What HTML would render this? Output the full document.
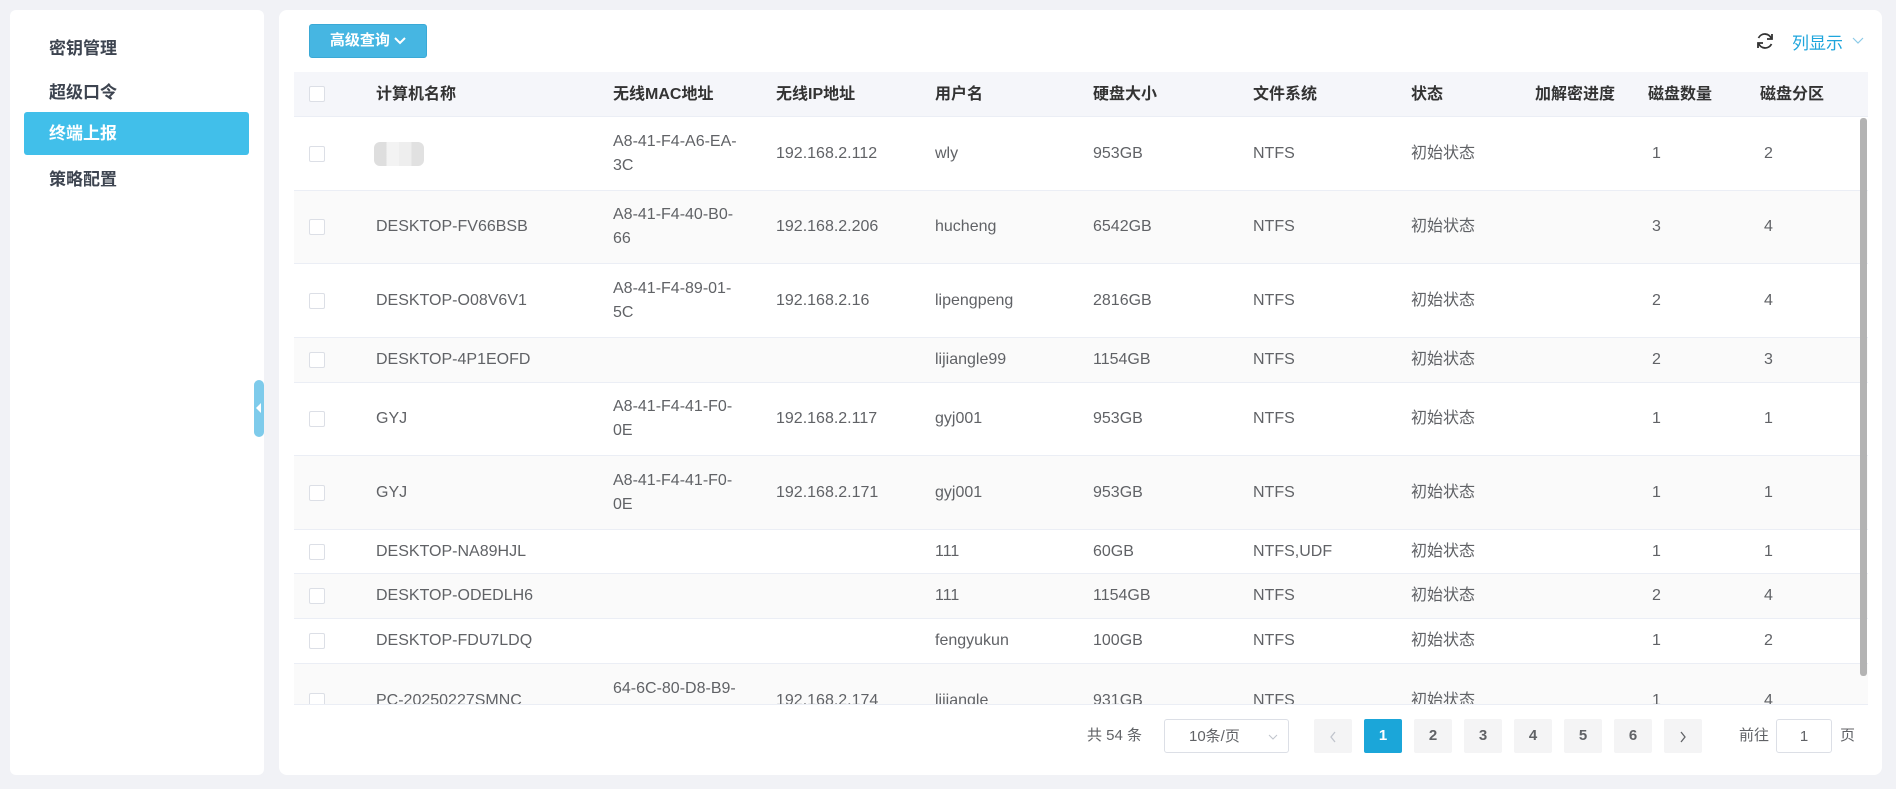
<!DOCTYPE html>
<html><head><meta charset="utf-8"><style>
*{margin:0;padding:0;box-sizing:border-box}
body{width:1896px;height:789px;background:#f1f2f6;font-family:"Liberation Sans","Noto Sans CJK SC",sans-serif;position:relative;overflow:hidden;color:#606266}
.side{position:absolute;left:10px;top:10px;width:254px;height:765px;background:#fff;border-radius:6px}
.mi{position:absolute;left:14px;width:225px;height:43px;line-height:43px;padding-left:25px;font-size:17px;font-weight:bold;color:#3d4450;border-radius:3px}
.mi.on{background:#41bfea;color:#fff}
.handle{position:absolute;left:254px;top:380px;width:10px;height:57px;background:#7ecbeb;border-radius:5px}
.handle:after{content:"";position:absolute;left:2px;top:23px;border:5px solid transparent;border-right:5px solid #fff;border-left:0}
.main{position:absolute;left:279px;top:10px;width:1603px;height:765px;background:#fff;border-radius:8px}
.btn{position:absolute;left:309px;top:24px;width:118px;height:34px;background:#46b6e2;border:1px solid #3aa9d6;border-radius:3px;color:#fff;font-size:15px;font-weight:bold;line-height:32px;text-align:center}
.hdr{position:absolute;left:294px;top:72px;width:1574px;height:45px;background:#f5f6fa;border-bottom:1px solid #ebeef5}
.th{position:absolute;top:0;line-height:45px;font-size:16px;font-weight:bold;color:#333}
.body{position:absolute;left:294px;top:117px;width:1574px;height:588px;overflow:hidden;border-bottom:1px solid #ebeef5}
.row{position:absolute;left:0;width:1574px;border-bottom:1px solid #ebeef5}
.row.g{background:#fafafa}
.td{position:absolute;top:50%;transform:translateY(-50%);font-size:16px;line-height:24px;color:#606266}
.cb{position:absolute;left:15px;width:16px;height:16px;border:1px solid #dcdfe6;border-radius:2px;background:#fff;top:50%;margin-top:-8px}
.sb{position:absolute;left:1860px;top:118px;width:7px;height:558px;background:#b3b3b3;border-radius:3px}
.pg{position:absolute;top:719px;height:34px;line-height:34px;font-size:15px;color:#606266}
.pb{position:absolute;top:719px;width:38px;height:34px;background:#f4f4f5;border-radius:2px;text-align:center;line-height:34px;font-size:15px;font-weight:bold;color:#606266}
.pb svg{position:absolute;left:15px;top:12px}
</style></head><body>
<div class="side">
<div class="mi" style="top:17px">密钥管理</div>
<div class="mi" style="top:61px">超级口令</div>
<div class="mi on" style="top:102px">终端上报</div>
<div class="mi" style="top:148px">策略配置</div>
</div>
<div class="handle"></div>
<div class="main"></div>
<div class="btn">高级查询 <svg width="12" height="8" viewBox="0 0 12 8" style="vertical-align:middle"><path d="M1 1l5 5 5-5" stroke="#fff" stroke-width="2" fill="none"/></svg></div>
<svg style="position:absolute;left:1755px;top:31px" width="20" height="20" viewBox="0 0 20 20"><path d="M16.5 8A7 7 0 0 0 3.5 7" stroke="#333" stroke-width="1.8" fill="none"/><path d="M3.5 12a7 7 0 0 0 13 1" stroke="#333" stroke-width="1.8" fill="none"/><path d="M17 3v5h-5" stroke="#333" stroke-width="1.8" fill="none"/><path d="M3 17v-5h5" stroke="#333" stroke-width="1.8" fill="none"/></svg>
<div style="position:absolute;left:1792px;top:29px;font-size:17px;color:#1ea5dc">列显示</div>
<svg style="position:absolute;left:1852px;top:37px" width="12" height="8" viewBox="0 0 12 8"><path d="M1 1l5 5 5-5" stroke="#8ccbe8" stroke-width="1.2" fill="none"/></svg>
<div class="hdr">
<div class="cb" style="top:22px"></div>
<div class="th" style="left:82px">计算机名称</div>
<div class="th" style="left:319px">无线MAC地址</div>
<div class="th" style="left:482px">无线IP地址</div>
<div class="th" style="left:641px">用户名</div>
<div class="th" style="left:799px">硬盘大小</div>
<div class="th" style="left:959px">文件系统</div>
<div class="th" style="left:1117px">状态</div>
<div class="th" style="left:1241px">加解密进度</div>
<div class="th" style="left:1354px">磁盘数量</div>
<div class="th" style="left:1466px">磁盘分区</div>
</div>
<div class="body">
<div class="row" style="top:0;height:74px"><div class="cb"></div><div class="td" style="left:80px;width:50px;height:24px;background:linear-gradient(90deg,#d0d0d0 0 25%,#eee 25% 50%,#e6e6e6 50% 75%,#d4d4d4 75%);border-radius:6px;opacity:.7"></div><div class="td" style="left:319px">A8-41-F4-A6-EA-<br>3C</div><div class="td" style="left:482px">192.168.2.112</div><div class="td" style="left:641px">wly</div><div class="td" style="left:799px">953GB</div><div class="td" style="left:959px">NTFS</div><div class="td" style="left:1117px">初始状态</div><div class="td" style="left:1358px">1</div><div class="td" style="left:1470px">2</div></div>
<div class="row g" style="top:74px;height:73px"><div class="cb"></div><div class="td" style="left:82px">DESKTOP-FV66BSB</div><div class="td" style="left:319px">A8-41-F4-40-B0-<br>66</div><div class="td" style="left:482px">192.168.2.206</div><div class="td" style="left:641px">hucheng</div><div class="td" style="left:799px">6542GB</div><div class="td" style="left:959px">NTFS</div><div class="td" style="left:1117px">初始状态</div><div class="td" style="left:1358px">3</div><div class="td" style="left:1470px">4</div></div>
<div class="row" style="top:147px;height:74px"><div class="cb"></div><div class="td" style="left:82px">DESKTOP-O08V6V1</div><div class="td" style="left:319px">A8-41-F4-89-01-<br>5C</div><div class="td" style="left:482px">192.168.2.16</div><div class="td" style="left:641px">lipengpeng</div><div class="td" style="left:799px">2816GB</div><div class="td" style="left:959px">NTFS</div><div class="td" style="left:1117px">初始状态</div><div class="td" style="left:1358px">2</div><div class="td" style="left:1470px">4</div></div>
<div class="row g" style="top:221px;height:45px"><div class="cb"></div><div class="td" style="left:82px">DESKTOP-4P1EOFD</div><div class="td" style="left:641px">lijiangle99</div><div class="td" style="left:799px">1154GB</div><div class="td" style="left:959px">NTFS</div><div class="td" style="left:1117px">初始状态</div><div class="td" style="left:1358px">2</div><div class="td" style="left:1470px">3</div></div>
<div class="row" style="top:266px;height:73px"><div class="cb"></div><div class="td" style="left:82px">GYJ</div><div class="td" style="left:319px">A8-41-F4-41-F0-<br>0E</div><div class="td" style="left:482px">192.168.2.117</div><div class="td" style="left:641px">gyj001</div><div class="td" style="left:799px">953GB</div><div class="td" style="left:959px">NTFS</div><div class="td" style="left:1117px">初始状态</div><div class="td" style="left:1358px">1</div><div class="td" style="left:1470px">1</div></div>
<div class="row g" style="top:339px;height:74px"><div class="cb"></div><div class="td" style="left:82px">GYJ</div><div class="td" style="left:319px">A8-41-F4-41-F0-<br>0E</div><div class="td" style="left:482px">192.168.2.171</div><div class="td" style="left:641px">gyj001</div><div class="td" style="left:799px">953GB</div><div class="td" style="left:959px">NTFS</div><div class="td" style="left:1117px">初始状态</div><div class="td" style="left:1358px">1</div><div class="td" style="left:1470px">1</div></div>
<div class="row" style="top:413px;height:44px"><div class="cb"></div><div class="td" style="left:82px">DESKTOP-NA89HJL</div><div class="td" style="left:641px">111</div><div class="td" style="left:799px">60GB</div><div class="td" style="left:959px">NTFS,UDF</div><div class="td" style="left:1117px">初始状态</div><div class="td" style="left:1358px">1</div><div class="td" style="left:1470px">1</div></div>
<div class="row g" style="top:457px;height:45px"><div class="cb"></div><div class="td" style="left:82px">DESKTOP-ODEDLH6</div><div class="td" style="left:641px">111</div><div class="td" style="left:799px">1154GB</div><div class="td" style="left:959px">NTFS</div><div class="td" style="left:1117px">初始状态</div><div class="td" style="left:1358px">2</div><div class="td" style="left:1470px">4</div></div>
<div class="row" style="top:502px;height:45px"><div class="cb"></div><div class="td" style="left:82px">DESKTOP-FDU7LDQ</div><div class="td" style="left:641px">fengyukun</div><div class="td" style="left:799px">100GB</div><div class="td" style="left:959px">NTFS</div><div class="td" style="left:1117px">初始状态</div><div class="td" style="left:1358px">1</div><div class="td" style="left:1470px">2</div></div>
<div class="row g" style="top:547px;height:74px"><div class="cb"></div><div class="td" style="left:82px">PC-20250227SMNC</div><div class="td" style="left:319px">64-6C-80-D8-B9-<br>2A</div><div class="td" style="left:482px">192.168.2.174</div><div class="td" style="left:641px">lijiangle</div><div class="td" style="left:799px">931GB</div><div class="td" style="left:959px">NTFS</div><div class="td" style="left:1117px">初始状态</div><div class="td" style="left:1358px">1</div><div class="td" style="left:1470px">4</div></div>
</div>
<div class="sb"></div>
<div class="pg" style="left:1087px">共 54 条</div>
<div class="pg" style="left:1164px;width:125px;border:1px solid #dcdfe6;border-radius:3px;padding-left:24px">10条/页<svg style="position:absolute;right:10px;top:14px" width="10" height="6" viewBox="0 0 10 6"><path d="M1 1l4 4 4-4" stroke="#c0c4cc" fill="none"/></svg></div>
<div class="pb" style="left:1314px"><svg width="8" height="12" viewBox="0 0 8 12"><path d="M6 1L2 6l4 5" stroke="#c0c4cc" stroke-width="1.3" fill="none"/></svg></div>
<div class="pb" style="left:1364px;background:#1ba6d9;color:#fff">1</div>
<div class="pb" style="left:1414px">2</div>
<div class="pb" style="left:1464px">3</div>
<div class="pb" style="left:1514px">4</div>
<div class="pb" style="left:1564px">5</div>
<div class="pb" style="left:1614px">6</div>
<div class="pb" style="left:1664px"><svg width="8" height="12" viewBox="0 0 8 12"><path d="M2 1l4 5-4 5" stroke="#606266" stroke-width="1.3" fill="none"/></svg></div>
<div class="pg" style="left:1739px">前往</div>
<div class="pg" style="left:1776px;width:56px;border:1px solid #dcdfe6;border-radius:3px;text-align:center">1</div>
<div class="pg" style="left:1840px">页</div>
</body></html>
